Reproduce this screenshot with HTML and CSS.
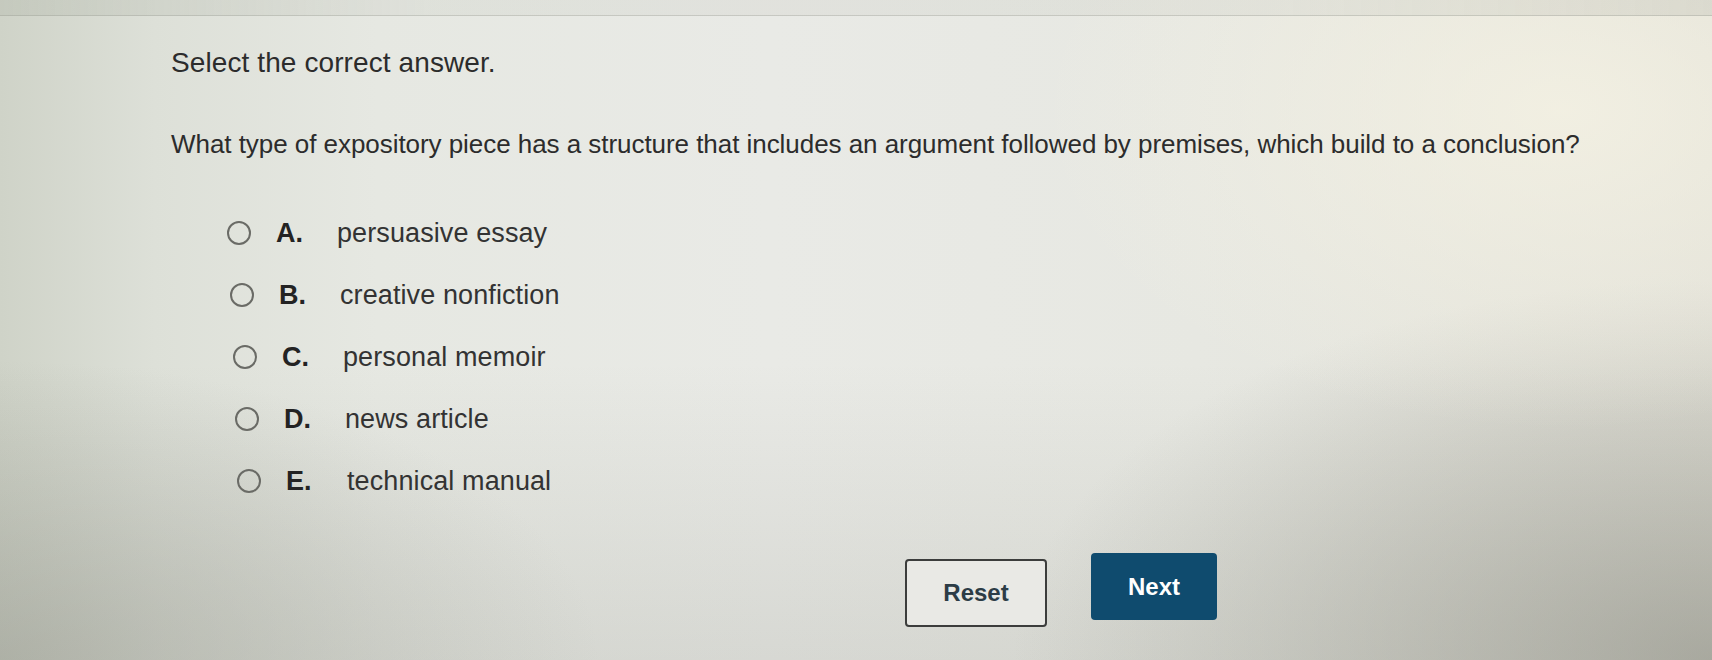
FILE: index.html
```html
<!DOCTYPE html>
<html lang="en">
<head>
<meta charset="utf-8">
<title>Select the correct answer</title>
<link rel="stylesheet" href="styles.css">
</head>
<body>
<div class="screen">
  <div class="topbar"></div>
  <main class="quiz">
    <p class="instruction">Select the correct answer.</p>
    <p class="question">What type of expository piece has a structure that includes an argument followed by premises, which build to a conclusion?</p>
    <ul class="options">
      <li class="option opt-a"><span class="radio"></span><span class="letter">A.</span><span class="label">persuasive essay</span></li>
      <li class="option opt-b"><span class="radio"></span><span class="letter">B.</span><span class="label">creative nonfiction</span></li>
      <li class="option opt-c"><span class="radio"></span><span class="letter">C.</span><span class="label">personal memoir</span></li>
      <li class="option opt-d"><span class="radio"></span><span class="letter">D.</span><span class="label">news article</span></li>
      <li class="option opt-e"><span class="radio"></span><span class="letter">E.</span><span class="label">technical manual</span></li>
    </ul>
    <div class="actions">
      <button class="btn btn-reset" type="button">Reset</button>
      <button class="btn btn-next" type="button">Next</button>
    </div>
  </main>
</div>
</body>
</html>
```
FILE: styles.css
```css
html, body {
  margin: 0;
  padding: 0;
}

body {
  width: 1712px;
  height: 660px;
  overflow: hidden;
  font-family: "Liberation Sans", Arial, sans-serif;
  color: #2a2a2a;
}

.screen {
  width: 1712px;
  height: 660px;
  background:
    radial-gradient(ellipse 520px 320px at 1560px 110px, rgba(246, 243, 228, 0.75), rgba(246, 243, 228, 0) 100%),
    radial-gradient(ellipse 700px 380px at 1712px 660px, rgba(135, 136, 126, 0.55), rgba(135, 136, 126, 0) 100%),
    radial-gradient(ellipse 600px 300px at 0px 660px, rgba(150, 152, 142, 0.45), rgba(150, 152, 142, 0) 100%),
    linear-gradient(to bottom, rgba(0, 0, 0, 0) 55%, rgba(120, 122, 112, 0.16) 100%),
    linear-gradient(to right, #cfd3c8 0%, #dde0d8 9%, #e6e8e2 22%, #e9eae6 45%, #e7e8e2 70%, #e2e1d8 100%);
  display: flex;
  flex-direction: column;
}

.topbar {
  height: 15px;
  flex: none;
  background: linear-gradient(to right, rgba(185, 190, 178, 0.45), rgba(200, 202, 194, 0.25) 25%, rgba(200, 202, 194, 0.25) 75%, rgba(190, 190, 180, 0.35));
  border-bottom: 1px solid rgba(150, 152, 142, 0.35);
}

.quiz {
  padding-left: 171px;
}

.instruction {
  margin: 31px 0 0 0;
  font-size: 28px;
  line-height: 32px;
  letter-spacing: 0.1px;
  color: #2c2c2c;
}

.question {
  margin: 49px 0 0 0;
  font-size: 26px;
  line-height: 32px;
  letter-spacing: -0.05px;
  white-space: nowrap;
  color: #2c2c2c;
}

.options {
  list-style: none;
  margin: 53px 0 0 0;
  padding: 0;
  display: flex;
  flex-direction: column;
  gap: 22px;
}

.option {
  display: flex;
  align-items: center;
  height: 40px;
  font-size: 27px;
  line-height: 40px;
}

.opt-a { margin-left: 56px; }
.opt-b { margin-left: 59px; }
.opt-c { margin-left: 62px; }
.opt-d { margin-left: 64px; }
.opt-e { margin-left: 66px; }

.radio {
  width: 20px;
  height: 20px;
  border: 2px solid #6a6b66;
  border-radius: 50%;
  flex: none;
  margin-right: 25px;
}

.letter {
  width: 61px;
  font-weight: bold;
  color: #232323;
  flex: none;
}

.label {
  color: #333;
  letter-spacing: 0.1px;
}

.actions {
  display: flex;
  align-items: flex-start;
  gap: 44px;
  margin-top: 52px;
  padding-left: 734px;
}

.btn {
  font-family: "Liberation Sans", Arial, sans-serif;
  font-weight: bold;
  font-size: 24px;
  border-radius: 4px;
  padding: 0;
  cursor: pointer;
}

.btn-reset {
  width: 142px;
  height: 68px;
  margin-top: 6px;
  background: #e9e9e5;
  border: 2px solid #3c3d3c;
  color: #2c3c46;
}

.btn-next {
  width: 126px;
  height: 67px;
  background: #0f4b6e;
  border: none;
  color: #ffffff;
}
```
